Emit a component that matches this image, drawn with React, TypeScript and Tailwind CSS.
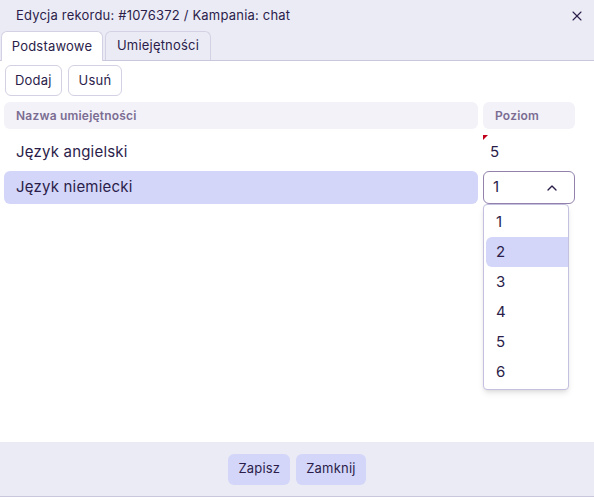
import { ChevronUp, X } from "lucide-react";

const rows = [
  { name: "Język angielski", level: "5" },
  { name: "Język niemiecki", level: "1" },
];

const options = ["1", "2", "3", "4", "5", "6"];

export default function App() {
  return (
    <div
      className="flex h-[500px] w-[594px] flex-col bg-white tracking-[0.2px] text-[#2b1d4a]"
      style={{ fontFamily: "Inter, 'Noto Sans', sans-serif" }}
    >
      {/* header */}
      <div className="flex flex-col border-b border-[#c9c7de] bg-[#ebebf6]">
        <div className="flex h-[31px] items-center justify-between pl-4 pr-[9px] pt-[1px]">
          <span className="text-[13px]">Edycja rekordu: #1076372 / Kampania: chat</span>
          <X className="h-4 w-4" strokeWidth={1.6} />
        </div>
        <div className="flex gap-[2px] pl-[1px]">
          <div className="-mb-px flex h-[30px] w-[102px] items-center justify-center rounded-t-md border border-b-0 border-[#d3d1e3] bg-white text-[13px]">
            Podstawowe
          </div>
          <div className="flex h-[29px] w-[106px] items-center justify-center rounded-t-md border border-b-0 border-[#d3d1e3] text-[13px]">
            Umiejętności
          </div>
        </div>
      </div>

      {/* body */}
      <div className="relative flex-1 px-1">
        <div className="flex gap-[6px] pl-px pt-1">
          <button className="h-[31px] rounded-md border border-[#d3d1e3] px-[9px] text-[13px]">Dodaj</button>
          <button className="h-[31px] rounded-md border border-[#d3d1e3] px-[10px] text-[13px]">Usuń</button>
        </div>

        <div className="mt-[6px] flex gap-[5px]">
          <div className="flex h-[27px] w-[474px] items-center rounded-md bg-[#f3f2f9] pl-3 text-[12px] font-semibold text-[#7b6d92]">
            Nazwa umiejętności
          </div>
          <div className="flex h-[27px] w-[92px] items-center rounded-md bg-[#f3f2f9] pl-3 text-[12px] font-semibold text-[#7b6d92]">
            Poziom
          </div>
        </div>

        <div className="mt-[6px] flex h-[35px] gap-[5px]">
          <div className="flex w-[474px] items-center pl-3 text-[15px]">{rows[0].name}</div>
          <div className="relative flex w-[92px] items-center pl-[7px] text-[15px]">
            <span className="absolute left-0 top-0 h-0 w-0 border-r-[5px] border-t-[5px] border-r-transparent border-t-[#c0001a]" />
            {rows[0].level}
          </div>
        </div>

        <div className="mt-[1px] flex h-[33px] gap-[5px]">
          <div className="flex w-[474px] items-center rounded-md bg-[#d3d6f8] pl-3 text-[15px]">{rows[1].name}</div>
          <div className="flex w-[92px] items-center justify-between rounded-md border border-[#9282ad] pl-[9px] pr-[14px] text-[15px]">
            {rows[1].level}
            <ChevronUp className="h-4 w-4" strokeWidth={2} />
          </div>
        </div>

        {/* dropdown */}
        <div className="absolute left-[483px] top-[143px] w-[86px] rounded-[4px] border border-[#c3c1df] bg-white py-[2px] shadow-md">
          {options.map((o) => (
            <div key={o} className="pl-[2px]">
              <div
                className={
                  o === "2"
                    ? "flex h-[30px] items-center rounded-l-md bg-[#d3d6f8] pl-[10px] text-[15px]"
                    : "flex h-[30px] items-center pl-[10px] text-[15px]"
                }
              >
                {o}
              </div>
            </div>
          ))}
        </div>
      </div>

      {/* footer */}
      <div className="mb-[3px] flex h-[55px] items-center justify-center gap-[6px] border-b border-[#c9c7de] bg-[#ebebf6]">
        <button className="h-[31px] rounded-md bg-[#d3d6f8] px-[10px] text-[13px]">Zapisz</button>
        <button className="h-[31px] rounded-md bg-[#d3d6f8] px-[10px] text-[13px]">Zamknij</button>
      </div>
    </div>
  );
}
